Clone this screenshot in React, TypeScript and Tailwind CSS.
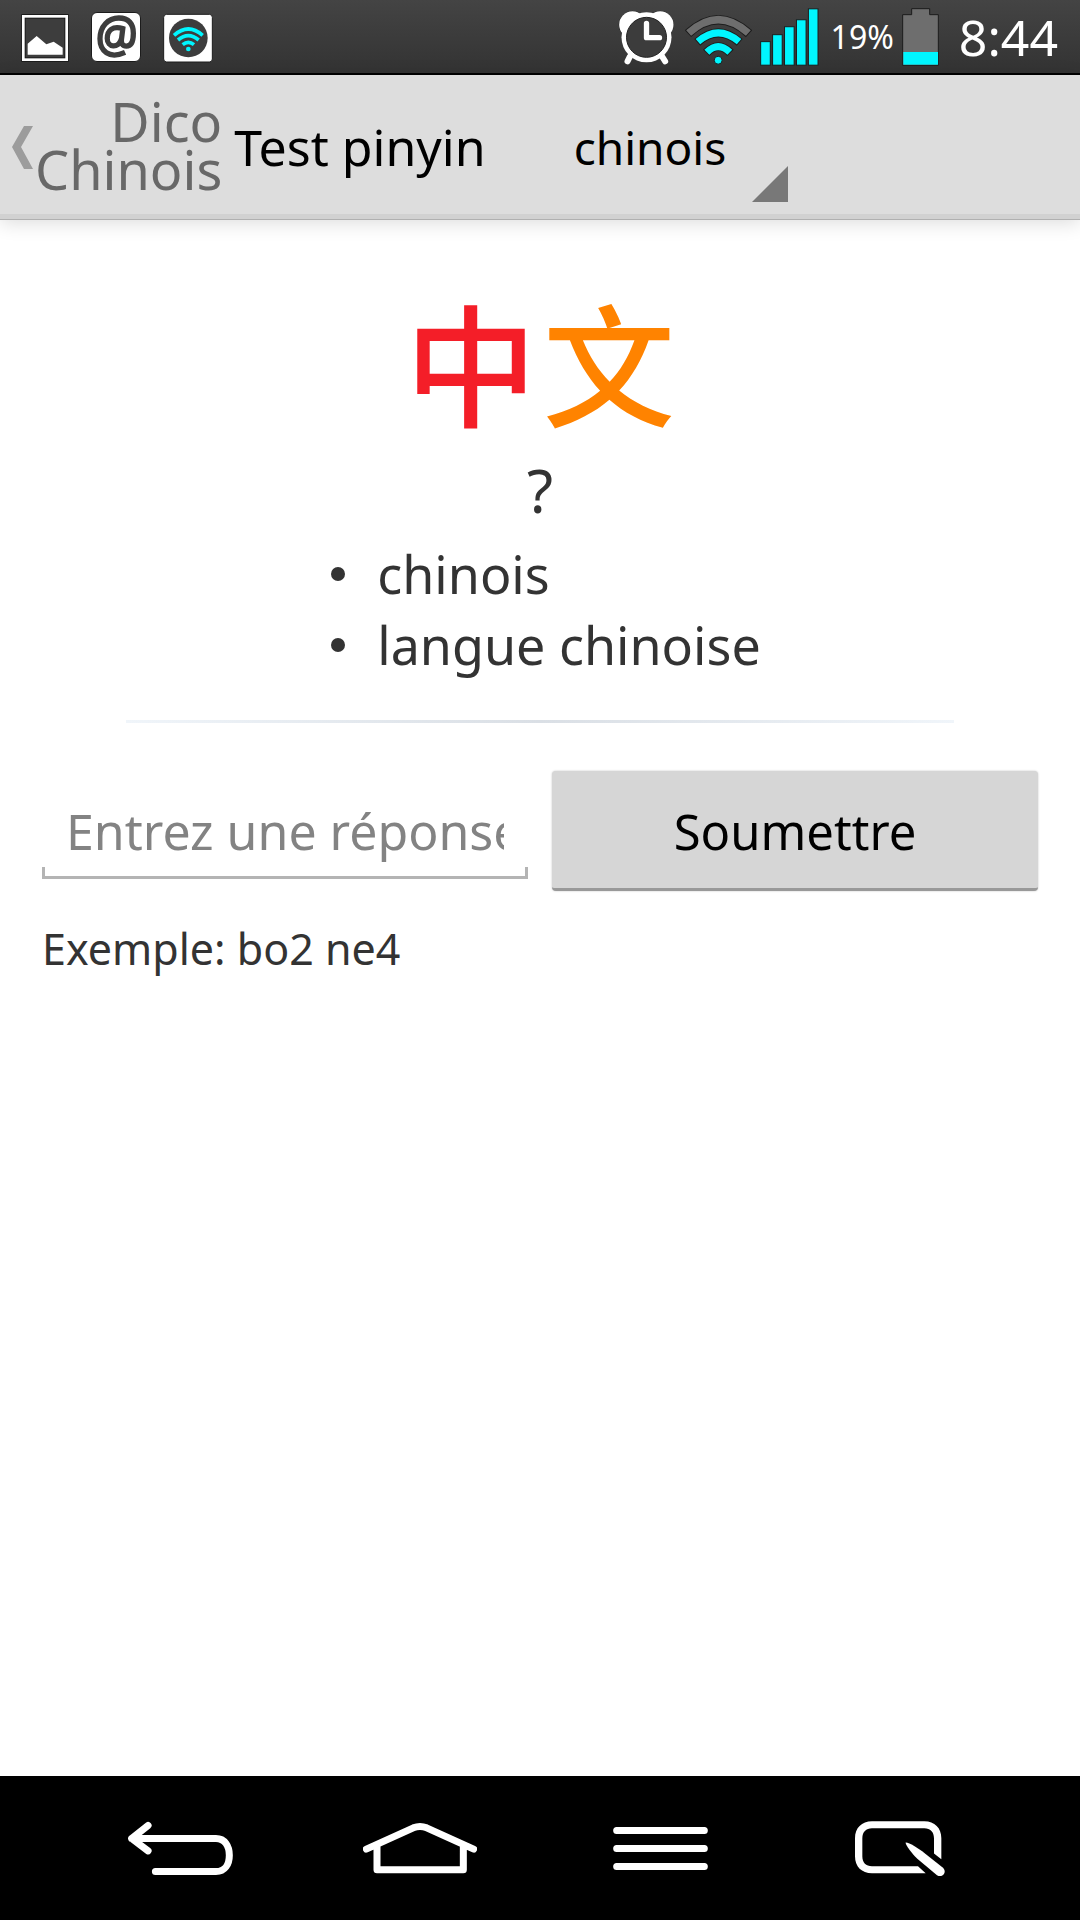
const meanings = ["chinois", "langue chinoise"];

function PictureIcon() {
  return (
    <svg viewBox="64 24 144 174" className="h-[58px] w-12" aria-hidden="true">
      <rect x="65" y="42" width="142" height="144" fill="#1c1c1c" />
      <rect x="67" y="45" width="138" height="138" fill="#fff" />
      <rect x="75" y="53" width="122" height="122" fill="#1c1c1c" />
      <rect x="78" y="56" width="116" height="116" fill="#3d3d3d" />
      <path d="M84 131L111 108L140 133L162 125L189 143V164H84Z" fill="#fff" />
    </svg>
  );
}

function MailIcon() {
  return (
    <span className="flex h-[50px] w-[50px] items-center justify-center rounded-md border border-[#1c1c1c] bg-white text-[#3d3d3d]">
      <svg viewBox="290 46 118 130" className="h-[43px] w-[39px]" fill="none" stroke="currentColor" strokeWidth="16" aria-hidden="true">
        <path d="M375 159C326 181 299 154 299 118C299 80 324 55 356 55C386 55 400 73 400 101C400 126 392 140 379 140C367 140 363 132 364 120L368 87C337 78 321 92 321 117C321 145 355 149 364 118" />
      </svg>
    </span>
  );
}

function HotspotIcon() {
  return (
    <svg viewBox="492 24 150 174" className="h-[58px] w-[50px]" fill="none" aria-hidden="true">
      <rect x="494" y="43" width="146" height="143" rx="9" fill="#fff" stroke="#1c1c1c" strokeWidth="3" />
      <circle cx="568" cy="114" r="58" fill="#3d3d3d" />
      <g stroke="#00f6ff" strokeWidth="11">
        <path d="M525 106Q568 68 611 106" />
        <path d="M537 120Q568 94 599 120" />
        <path d="M551 134Q568 120 585 134" />
      </g>
      <circle cx="568" cy="147" r="7" fill="#00f6ff" />
    </svg>
  );
}

function AlarmIcon() {
  return (
    <svg viewBox="58 24 170 174" className="h-[58px] w-[57px]" aria-hidden="true">
      <g fill="#fff" stroke="#222" strokeWidth="3" paintOrder="stroke">
        <circle cx="101" cy="74" r="40" />
        <circle cx="184" cy="74" r="40" />
      </g>
      <g stroke="#fff" strokeWidth="18" strokeLinecap="round">
        <path d="M93 170L86 184M190 170L199 184" />
      </g>
      <circle cx="143" cy="112" r="75" fill="#fff" />
      <circle cx="143" cy="112" r="60" fill="#3c3c3c" stroke="#222" strokeWidth="3" />
      <path d="M143 70V113H182" fill="none" stroke="#fff" strokeWidth="16" strokeLinecap="round" strokeLinejoin="round" />
    </svg>
  );
}

function WifiIcon() {
  return (
    <svg viewBox="261 24 202 174" className="h-[58px] w-[67px]" fill="none" aria-hidden="true">
      <g stroke="#1c1c1c">
        <path d="M270 101Q361 17 454 101" strokeWidth="28" />
        <path d="M298 127Q361 70 426 127" strokeWidth="27" />
        <path d="M325 159Q361 121 398 159" strokeWidth="27" />
      </g>
      <path d="M272 99Q361 18 452 99" stroke="#6e6e6e" strokeWidth="22" />
      <g stroke="#00f6ff" strokeWidth="21">
        <path d="M300 125Q361 72 424 125" />
        <path d="M327 157Q361 123 396 157" />
      </g>
      <circle cx="361" cy="181" r="12" fill="#00f6ff" stroke="#1c1c1c" strokeWidth="3" />
    </svg>
  );
}

function SignalIcon() {
  return (
    <svg viewBox="483 24 178 174" className="h-[58px] w-[59px]" fill="#00f6ff" stroke="#1c1c1c" strokeWidth="3" aria-hidden="true">
      <rect x="485" y="125" width="29" height="71" />
      <rect x="521" y="104" width="29" height="92" />
      <rect x="557" y="80" width="29" height="116" />
      <rect x="593" y="59" width="29" height="137" />
      <rect x="629" y="26" width="29" height="170" />
    </svg>
  );
}

function BatteryIcon() {
  return (
    <svg viewBox="909 24 111 174" className="h-[58px] w-[37px]" aria-hidden="true">
      <path d="M911 196V44H938V26H992V44H1018V196Z" fill="#6e6e6e" stroke="#1c1c1c" strokeWidth="3" />
      <rect x="913" y="156" width="104" height="38" fill="#00f6ff" />
    </svg>
  );
}

function StatusBar() {
  return (
    <div className="flex h-[75px] items-center justify-between border-b-2 border-black bg-linear-to-b from-[#444] to-[#333] pr-[22px] pl-[21px] text-white">
      <div className="flex items-center gap-[22px]">
        <PictureIcon />
        <MailIcon />
        <HotspotIcon />
      </div>
      <div className="flex items-center">
        <AlarmIcon />
        <span className="mr-2 ml-2.5">
          <WifiIcon />
        </span>
        <SignalIcon />
        <span className="mr-2 ml-3 text-[32px] leading-none">19%</span>
        <BatteryIcon />
        <span className="ml-5 text-[50px] leading-none">8:44</span>
      </div>
    </div>
  );
}

function ActionBar() {
  return (
    <header className="relative flex h-[145px] items-center border-b border-[#b0b0b0] bg-[#ddd] text-black shadow-[inset_0_-5px_0_#d1d1d1,0_3px_18px_rgba(0,0,0,0.14)]">
      <a href="#accueil" className="flex items-center pl-3" aria-label="Dico Chinois, retour">
        <svg viewBox="0 0 21 43" className="h-[43px] w-[21px]" aria-hidden="true">
          <path d="M12 0H21L9 21L21 43H12L0 21Z" fill="#9c9c9c" />
        </svg>
        <span className="ml-0.5 flex flex-col items-end pb-1 text-[54px] leading-12 text-[#686868]">
          <span>Dico</span>
          <span>Chinois</span>
        </span>
      </a>
      <h1 className="ml-3 text-[50px] leading-none">Test pinyin</h1>
      <div className="relative ml-[76px] w-[226px]">
        <select aria-label="Liste de mots" className="w-full appearance-none bg-transparent py-8 pr-0 pl-3 text-[46px] leading-none outline-none">
          <option>chinois</option>
        </select>
        <svg viewBox="0 0 36 36" className="pointer-events-none absolute right-0 bottom-0 h-9 w-9" aria-hidden="true">
          <path d="M36 0V36H0Z" fill="#787878" />
        </svg>
      </div>
    </header>
  );
}

function Question() {
  return (
    <section className="flex flex-col items-center pt-17 text-[#333]">
      <p lang="zh" className="flex gap-1.5 font-['Noto_Sans_CJK_SC',sans-serif] text-[132px] leading-[144px] font-medium">
        <span className="text-[#f41e28]">中</span>
        <span className="text-[#ff8300]">文</span>
      </p>
      <p className="mt-5 text-[60px] leading-[76px]">?</p>
      <ul className="mt-2.5 pl-3 text-[52px] leading-[71px]">
        {meanings.map((meaning) => (
          <li key={meaning} className="flex items-center gap-8">
            <span aria-hidden="true" className="h-3.5 w-3.5 rounded-full bg-[#333]" />
            {meaning}
          </li>
        ))}
      </ul>
    </section>
  );
}

function AnswerForm() {
  return (
    <form className="grid grid-cols-2 gap-x-6 px-[42px] pt-12" onSubmit={(e) => e.preventDefault()}>
      <div className="flex h-[108px] flex-col">
        <input
          type="text"
          aria-label="Réponse"
          placeholder="Entrez une réponse"
          className="mx-6 min-w-0 flex-1 pt-6 text-[50px] leading-none outline-none placeholder:text-[#838383]"
        />
        <div className="h-3 border-3 border-t-0 border-[#b4b4b4]" />
      </div>
      <button
        type="submit"
        className="h-[120px] rounded-sm border-b-3 border-[#999] bg-[#d6d6d6] pt-1 text-[49px] leading-none text-black shadow-[0_0_2px_rgba(0,0,0,0.25)]"
      >
        Soumettre
      </button>
      <p className="col-span-2 mt-7 text-[43px] leading-[60px] text-[#333]">Exemple: bo2 ne4</p>
    </form>
  );
}

function NavBar() {
  return (
    <nav className="grid h-36 grid-cols-4 items-center bg-black px-15 text-white">
      <button type="button" aria-label="Retour" className="flex justify-center">
        <svg viewBox="82 180 314 170" className="h-[57px] w-[105px]" fill="none" stroke="currentColor" strokeWidth="21" strokeLinecap="round" strokeLinejoin="round" aria-hidden="true">
          <path d="M142 196L93 235L142 272M93 235H345C372 235 385 258 385 285C385 312 372 334 345 334H164" />
        </svg>
      </button>
      <button type="button" aria-label="Accueil" className="flex justify-center">
        <svg viewBox="789 180 342 170" className="h-[57px] w-[114px]" fill="none" stroke="currentColor" strokeWidth="21" strokeLinecap="round" strokeLinejoin="round" aria-hidden="true">
          <path d="M799 267L940 203Q960 195 980 203L1121 267M831 258V329H1090V258" />
        </svg>
      </button>
      <button type="button" aria-label="Menu" className="flex justify-center">
        <svg viewBox="100 180 284 170" className="h-[57px] w-[95px]" stroke="currentColor" strokeWidth="21" strokeLinecap="round" aria-hidden="true">
          <path d="M111 211H373M111 265H373M111 319H373" />
        </svg>
      </button>
      <button type="button" aria-label="QuickMemo" className="flex justify-center">
        <svg viewBox="829 183 270 170" className="h-[57px] w-[90px]" aria-hidden="true">
          <path
            d="M1018 321H880C862 321 851 310 851 291V237C851 218 862 207 880 207H1037C1055 207 1066 218 1066 237V283L1088 300V237C1088 206 1068 186 1037 186H880C849 186 829 206 829 237V291C829 322 849 342 880 342H1041Z"
            fill="currentColor"
          />
          <path d="M981 250C990 249 1019 267 1038 282L1092 325C1107 339 1091 358 1075 348L1016 299C999 283 979 256 981 250Z" fill="currentColor" />
        </svg>
      </button>
    </nav>
  );
}

export default function App() {
  return (
    <div className="flex min-h-screen flex-col bg-white font-['Noto_Sans','Noto_Sans_CJK_SC',sans-serif]">
      <StatusBar />
      <ActionBar />
      <main className="flex-1">
        <Question />
        <hr className="mx-[126px] mt-10 h-[3px] border-0 bg-linear-to-r from-[#f0f5fa] via-[#dadfe5] to-[#f0f5fa]" />
        <AnswerForm />
      </main>
      <NavBar />
    </div>
  );
}
